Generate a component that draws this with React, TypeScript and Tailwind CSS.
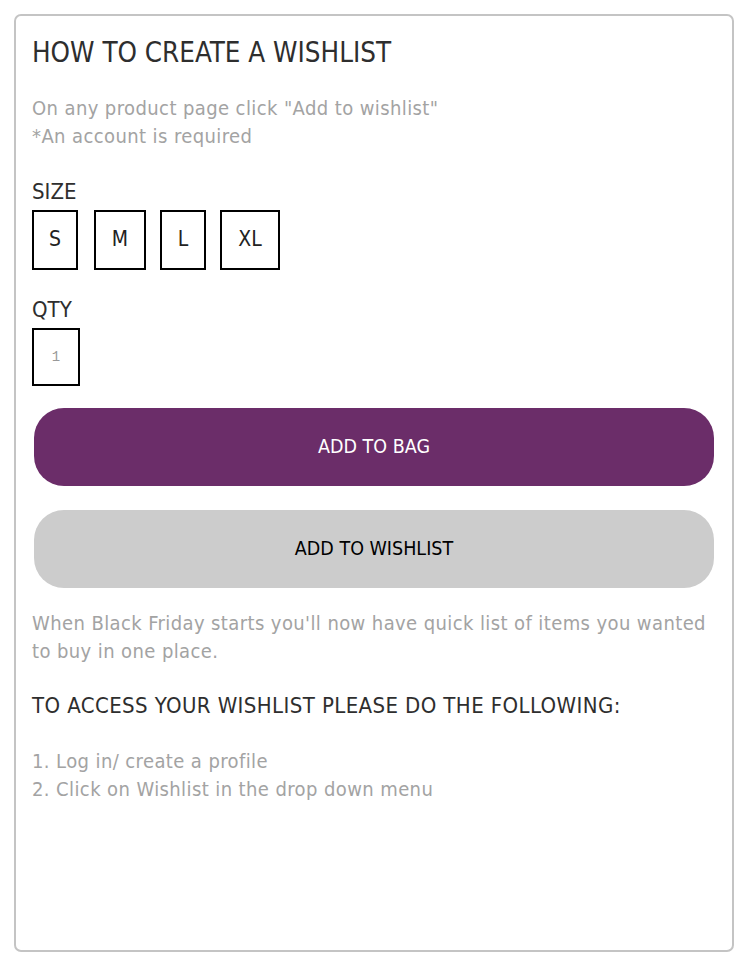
import React from 'react';

const font = { fontFamily: "'Liberation Sans Narrow', 'DejaVu Sans Condensed', sans-serif" };

const sizes = [
  { label: 'S', w: 'w-[46px] mr-[2px]' },
  { label: 'M', w: 'w-[52px]' },
  { label: 'L', w: 'w-[46px]' },
  { label: 'XL', w: 'w-[60px]' },
];

export default function App() {
  return (
    <div className="min-h-[972px] bg-white pt-[14px] pl-[14px]" style={font}>
      <div className="w-[720px] h-[938px] border-2 border-[#c4c4c4] rounded-[7px] px-[16px] pt-[18px]">
        {/* Title */}
        <h1 className="text-[27.5px] leading-[36px] text-[#2e2e2e]">HOW TO CREATE A WISHLIST</h1>

        <p className="mt-[24px] text-[20px] leading-[28px] text-[#a3a3a3] tracking-[0.4px]">
          On any product page click "Add to wishlist"
          <br />
          *An account is required
        </p>

        {/* Size picker */}
        <div className="mt-[28px] text-[22px] leading-[28px] text-[#2e2e2e]">SIZE</div>
        <div className="mt-[4px] flex gap-[14px]">
          {sizes.map(s => (
            <button
              key={s.label}
              className={`${s.w} h-[60px] border-2 border-black flex items-center justify-center text-[21px] text-[#222]`}
            >
              {s.label}
            </button>
          ))}
        </div>

        {/* Quantity */}
        <div className="mt-[26px] text-[22px] leading-[28px] text-[#2e2e2e]">QTY</div>
        <div
          className="mt-[4px] w-[48px] h-[58px] border-2 border-black flex items-center justify-center text-[14px] text-[#999]"
          style={{ fontFamily: "'Liberation Mono', monospace" }}
        >
          1
        </div>

        {/* Actions */}
        <button className="mt-[22px] ml-[2px] w-[680px] h-[78px] rounded-[30px] bg-[#6b2d69] text-white text-[19.5px] flex items-center justify-center">
          ADD TO BAG
        </button>
        <button className="mt-[24px] ml-[2px] w-[680px] h-[78px] rounded-[30px] bg-[#cccccc] text-black text-[19.5px] flex items-center justify-center">
          ADD TO WISHLIST
        </button>

        <p className="mt-[21px] text-[20px] leading-[28px] text-[#a3a3a3] tracking-[0.4px]">
          When Black Friday starts you'll now have quick list of items you wanted to buy in one place.
        </p>

        <h2 className="mt-[26px] text-[22px] leading-[30px] text-[#2e2e2e] tracking-[0.4px]">
          TO ACCESS YOUR WISHLIST PLEASE DO THE FOLLOWING:
        </h2>

        <ol className="mt-[26px] text-[20px] leading-[28px] text-[#a3a3a3] tracking-[0.4px]">
          <li>1. Log in/ create a profile</li>
          <li>2. Click on Wishlist in the drop down menu</li>
        </ol>
      </div>
    </div>
  );
}
